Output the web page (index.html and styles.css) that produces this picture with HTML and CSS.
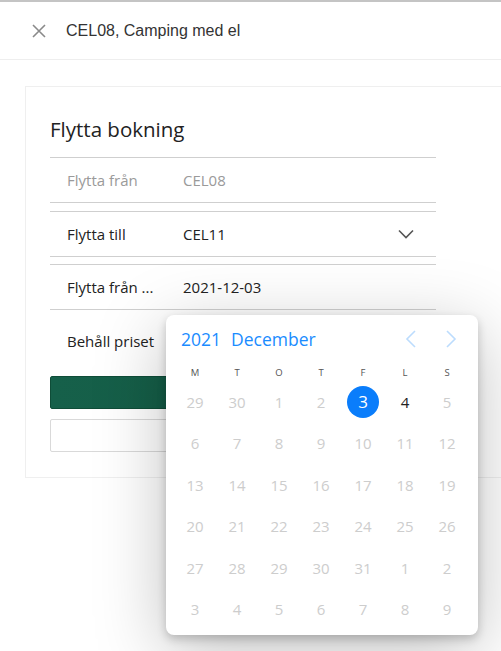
FILE: index.html
```html
<!DOCTYPE html>
<html lang="sv">
<head>
<meta charset="utf-8">
<title>Flytta bokning</title>
<link rel="stylesheet" href="styles.css">
</head>
<body>
<header class="topbar">
  <span class="close-icon">
    <svg width="14" height="14" viewBox="0 0 14 14"><path d="M1 1L13 13M13 1L1 13" stroke="#8a8a8a" stroke-width="1.6" fill="none"/></svg>
  </span>
  <span class="topbar-title">CEL08, Camping med el</span>
</header>
<main class="main">
  <section class="card">
    <h1 class="card-title">Flytta bokning</h1>
    <div class="row disabled">
      <span class="label">Flytta från</span>
      <span class="value">CEL08</span>
    </div>
    <div class="row">
      <span class="label">Flytta till</span>
      <span class="value">CEL11</span>
      <svg class="chevron" width="16" height="10" viewBox="0 0 16 10"><path d="M1 1.5L8 8.5L15 1.5" stroke="#555" stroke-width="1.6" fill="none"/></svg>
    </div>
    <div class="row">
      <span class="label">Flytta från ...</span>
      <span class="value">2021-12-03</span>
    </div>
    <div class="row plain">
      <span class="label">Behåll priset</span>
    </div>
    <button class="btn btn-primary" type="button"></button>
    <button class="btn btn-secondary" type="button"></button>
  </section>
</main>
<div class="picker">
  <div class="picker-head">
    <span class="ym">2021</span>
    <span class="ym">December</span>
    <span class="nav">
      <svg width="12" height="18" viewBox="0 0 12 18"><path d="M10 1L2 9L10 17" stroke="#bcdcfd" stroke-width="1.6" fill="none"/></svg>
      <svg width="12" height="18" viewBox="0 0 12 18"><path d="M2 1L10 9L2 17" stroke="#bcdcfd" stroke-width="1.6" fill="none"/></svg>
    </span>
  </div>
  <div class="grid weekdays">
    <span>M</span><span>T</span><span>O</span><span>T</span><span>F</span><span>L</span><span>S</span>
  </div>
  <div class="grid days">
    <span>29</span><span>30</span><span>1</span><span>2</span><span class="sel"><b>3</b></span><span class="active">4</span><span>5</span>
    <span>6</span><span>7</span><span>8</span><span>9</span><span>10</span><span>11</span><span>12</span>
    <span>13</span><span>14</span><span>15</span><span>16</span><span>17</span><span>18</span><span>19</span>
    <span>20</span><span>21</span><span>22</span><span>23</span><span>24</span><span>25</span><span>26</span>
    <span>27</span><span>28</span><span>29</span><span>30</span><span>31</span><span>1</span><span>2</span>
    <span>3</span><span>4</span><span>5</span><span>6</span><span>7</span><span>8</span><span>9</span>
  </div>
</div>
</body>
</html>
```

FILE: styles.css
```css
* { box-sizing: border-box; }
html, body { margin: 0; padding: 0; background: #fff; overflow: hidden; }
body { width: 501px; height: 651px; font-family: "Open Sans", "Noto Sans", sans-serif; color: #222; }

.topbar {
  height: 60px;
  border-top: 2px solid #c4c4c4;
  border-bottom: 1px solid #eeeeee;
  display: flex;
  align-items: center;
  padding-left: 32px;
  gap: 20px;
}
.close-icon { display: flex; width: 14px; height: 14px; }
.topbar-title { font-family: "Liberation Sans", Arial, sans-serif; font-size: 16px; color: #333; }

.main { padding: 26px 0 0 25px; }
.card {
  border: 1px solid #efefef;
  border-right: none;
  padding: 29px 25px 25px 24px;
  width: 476px;
}
.card-title {
  margin: 0 0 15px 0;
  font-weight: 400;
  font-size: 20.5px;
  line-height: 26px;
  color: #222;
  width: 386px;
}
.row {
  width: 386px;
  height: 46px;
  border-top: 1px solid #cfcfcf;
  border-bottom: 1px solid #cfcfcf;
  margin-bottom: 8px;
  display: flex;
  align-items: center;
  padding-left: 17px;
  font-size: 15px;
  color: #222;
}
.row:nth-of-type(2) { margin-bottom: 7px; }
.row .label { width: 116px; white-space: nowrap; }
.row .value { flex: 1; }
.row.disabled { color: #9a9a9a; }
.row.plain { border-color: transparent; margin-bottom: 12px; }
.chevron { margin-right: 22px; }

.btn { display: block; width: 386px; height: 33px; border-radius: 2px; padding: 0; }
.btn-primary { background: linear-gradient(90deg, #16604a, #135a42); border: 1px solid #0f4d38; margin-bottom: 10px; }
.btn-secondary { background: #fff; border: 1px solid #d9d9d9; }

.picker {
  position: absolute;
  left: 166px;
  top: 315px;
  width: 312px;
  height: 320px;
  background: #fff;
  border-radius: 8px;
  box-shadow: 0 4px 10px rgba(0,0,0,0.2), 0 16px 70px rgba(0,0,0,0.25);
  padding: 0 10px 0 8px;
}
.picker-head {
  height: 48px;
  display: flex;
  align-items: center;
  padding-left: 7px;
  gap: 10px;
  color: #1a8cff;
  font-size: 17.5px;
}
.picker-head .nav { margin-left: auto; display: flex; gap: 28px; margin-right: 11px; }
.grid { display: grid; grid-template-columns: repeat(7, 42px); }
.weekdays { height: 18px; align-items: center; font-size: 9.5px; color: #555; }
.weekdays span { text-align: center; }
.days { grid-auto-rows: 41.5px; margin-top: 0; }
.days span { display: flex; align-items: center; justify-content: center; font-size: 15px; color: #cdcdcd; }
.days span.active { color: #222; }
.days span.sel b {
  font-weight: 400;
  width: 32px; height: 32px; border-radius: 50%;
  background: #0a7dfb; color: #fff;
  display: flex; align-items: center; justify-content: center; font-size: 17px;
}
```
